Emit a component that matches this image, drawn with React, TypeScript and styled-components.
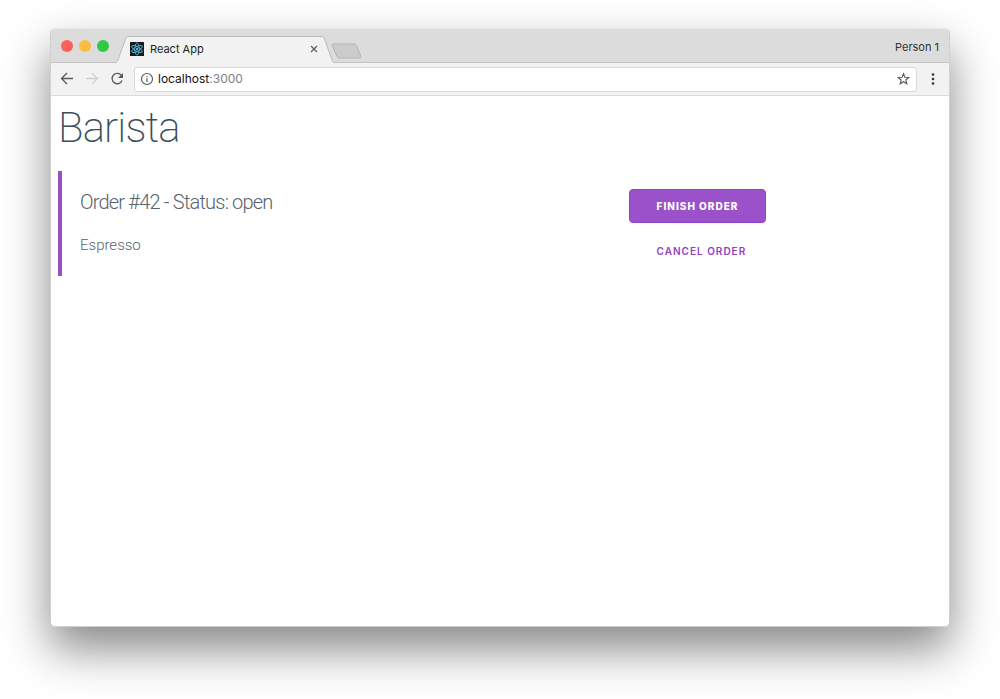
import React from "react";
import styled, { createGlobalStyle } from "styled-components";

const GlobalStyle = createGlobalStyle`
  *, *::before, *::after { box-sizing: border-box; }
  body { margin: 0; background: #fff; }
`;

const Desktop = styled.div`
  display: flex;
  min-height: 100vh;
  padding: 28px 50px 72px;
  overflow: hidden;
  font-family: Inter, "Liberation Sans", sans-serif;
`;

const BrowserWindow = styled.div`
  display: flex;
  flex: 1;
  flex-direction: column;
  min-width: 0;
  border: 1px solid #d0d0d0;
  border-top-color: #e8e8e8;
  border-radius: 5px;
  background: #fff;
  box-shadow: 0 22px 46px rgba(0, 0, 0, 0.47);
`;

const TabStrip = styled.div`
  display: flex;
  align-items: flex-end;
  height: 34px;
  padding: 0 10px;
  border-bottom: 1px solid #c3c3c3;
  border-radius: 4px 4px 0 0;
  background: #dcdcdc;
`;

const WindowControls = styled.div`
  display: flex;
  align-self: center;
  gap: 6px;
  padding-right: 6px;
`;

const WindowDot = styled.button<{ $color: string }>`
  width: 12px;
  height: 12px;
  padding: 0;
  border: 0;
  border-radius: 50%;
  background: ${(p) => p.$color};
`;

const Tab = styled.div`
  display: flex;
  height: 27px;
  margin-bottom: -1px;
`;

const TabEdge = styled.svg`
  display: block;
  width: 13px;
  height: 27px;
`;

const TabBody = styled.div`
  display: flex;
  align-items: center;
  width: 194px;
  padding: 0 2px 2px;
  border-top: 1px solid #bcbcbc;
  background: #f2f2f2;
  color: #222;
  font-size: 11px;
  line-height: 14px;
`;

const TabTitle = styled.span`
  flex: 1;
  margin-left: 6px;
`;

const IconButton = styled.button<{ $size: number; $color?: string }>`
  display: flex;
  flex: none;
  align-items: center;
  justify-content: center;
  width: ${(p) => p.$size}px;
  height: ${(p) => p.$size}px;
  padding: 0;
  border: 0;
  background: none;
  color: ${(p) => p.$color ?? "#5a5a5a"};
`;

const NewTabButton = styled.button`
  display: flex;
  align-self: flex-end;
  margin: 0 0 3px -4px;
  padding: 0;
  border: 0;
  background: none;
`;

const Profile = styled.button`
  align-self: center;
  margin-left: auto;
  padding: 2px 0 0;
  border: 0;
  background: none;
  color: #333;
  font-family: inherit;
  font-size: 11px;
  line-height: 14px;
`;

const Toolbar = styled.div`
  display: flex;
  align-items: center;
  height: 33px;
  padding: 0 8px;
  border-bottom: 1px solid #dcdcdc;
  background: #f2f2f2;
`;

const Navigation = styled.div`
  display: flex;
  gap: 9px;
  margin-right: 9px;
`;

const AddressBar = styled.div`
  display: flex;
  flex: 1;
  align-items: center;
  height: 25px;
  margin-right: 8px;
  padding: 0 5px;
  border: 1px solid #d8d8d8;
  border-radius: 3px;
  background: #fff;
`;

const Address = styled.a`
  flex: 1;
  margin-left: 4px;
  color: #808080;
  font-size: 12px;
  line-height: 16px;
  text-decoration: none;
`;

const Host = styled.span`
  color: #111;
`;

const Page = styled.main`
  padding: 7px 7px 24px;
  color: #56646e;
  font-family: Roboto, "Liberation Sans", sans-serif;
  font-weight: 300;
`;

const PageTitle = styled.h1`
  margin: 0 0 18px;
  color: #3b4f5a;
  font-size: 42px;
  font-weight: 200;
  letter-spacing: -0.02em;
  line-height: 50px;
`;

const OrderCard = styled.article`
  display: grid;
  grid-template-columns: 13fr 7fr;
  padding: 18px 18px 8px;
  border-left: 4px solid #9a4fc8;
`;

const OrderTitle = styled.h2`
  margin: 0 0 19px;
  font-size: 20px;
  font-weight: 300;
  letter-spacing: -0.04em;
  line-height: 26px;
`;

const OrderItem = styled.p`
  margin: 0;
  font-size: 15px;
  line-height: 22px;
`;

const Actions = styled.div`
  display: flex;
  flex-direction: column;
  align-items: flex-start;
  gap: 11px;
`;

const ActionButton = styled.button<{ $primary?: boolean }>`
  height: 34px;
  padding: 0 27px;
  border: 1px solid ${(p) => (p.$primary ? "#9142c5" : "transparent")};
  border-radius: 4px;
  background: ${(p) => (p.$primary ? "#9b51c9" : "transparent")};
  color: ${(p) => (p.$primary ? "#fff" : "#9142c5")};
  font-family: Inter, "Liberation Sans", sans-serif;
  font-size: 10px;
  font-weight: ${(p) => (p.$primary ? 800 : 600)};
  letter-spacing: 1px;
  line-height: 16px;
  text-transform: uppercase;
  white-space: nowrap;
`;

const ReactLogo = () => (
  <svg width="14" height="14" viewBox="0 0 28 28" aria-hidden="true">
    <rect width="28" height="28" rx="1" fill="#151a20" />
    <g fill="none" stroke="#55b9da" strokeWidth="1.7">
      <ellipse cx="14" cy="14" rx="12" ry="4.6" transform="rotate(30 14 14)" />
      <ellipse cx="14" cy="14" rx="12" ry="4.6" transform="rotate(90 14 14)" />
      <ellipse cx="14" cy="14" rx="12" ry="4.6" transform="rotate(150 14 14)" />
    </g>
    <circle cx="14" cy="14" r="2.4" fill="#55b9da" />
  </svg>
);

const ArrowIcon = ({ forward = false }: { forward?: boolean }) => (
  <svg width="16" height="16" viewBox="0 0 16 16" fill="none" stroke="currentColor" strokeWidth="1.3" aria-hidden="true">
    <path d={forward ? "M2 7.500h11.5M8 2 13.5 7.500 8 13" : "M14 7.500H2.5M8 2 2.5 7.500 8 13"} />
  </svg>
);

const ReloadIcon = () => (
  <svg width="16" height="16" viewBox="0 0 16 16" fill="none" stroke="currentColor" strokeWidth="1.3" aria-hidden="true">
    <path d="M12.4 4.3A5.2 5.2 0 1 0 13.1 9.600" />
    <path d="M14 2v5H9z" fill="currentColor" stroke="none" />
  </svg>
);

const InfoIcon = () => (
  <svg width="14" height="14" viewBox="0 0 14 14" fill="none" stroke="currentColor" strokeWidth="1.2" aria-hidden="true">
    <circle cx="7" cy="7" r="5.5" />
    <path d="M7 6.2V10M7 4v1.3" />
  </svg>
);

const StarIcon = () => (
  <svg width="14" height="14" viewBox="0 0 14 14" fill="none" stroke="currentColor" strokeWidth="1.1" strokeLinejoin="miter" aria-hidden="true">
    <path d="M6.500 1.700 7.900 5.300 11.800 5.500 8.800 8 9.800 11.800 6.500 9.700 3.200 11.800 4.200 8 1.200 5.500 5.100 5.300z" />
  </svg>
);

const App = () => (
  <>
    <GlobalStyle />
    <Desktop>
      <BrowserWindow>
        <TabStrip>
          <WindowControls>
            <WindowDot $color="#fc605b" aria-label="Close window" />
            <WindowDot $color="#fdbc40" aria-label="Minimize window" />
            <WindowDot $color="#2fc946" aria-label="Zoom window" />
          </WindowControls>
          <Tab>
            <TabEdge viewBox="0 0 13 27" aria-hidden="true">
              <path d="M0 27C2 26.500 2.500 25 3 24L10.500 3C11 1.500 11.500 .5 13 .5V27z" fill="#f2f2f2" />
              <path d="M0 26.500C2 26.500 2.500 25 3 24L10.500 3C11 1.500 11.500 .5 13 .5" fill="none" stroke="#bcbcbc" />
            </TabEdge>
            <TabBody>
              <ReactLogo />
              <TabTitle>React App</TabTitle>
              <IconButton $size={12} aria-label="Close tab">
                <svg width="8" height="8" viewBox="0 0 8 8" stroke="currentColor" strokeWidth="1.2" aria-hidden="true">
                  <path d="M1 1l6 6M7 1 1 7" />
                </svg>
              </IconButton>
            </TabBody>
            <TabEdge viewBox="0 0 13 27" aria-hidden="true">
              <path d="M13 27C11 26.500 10.500 25 10 24L2.500 3C2 1.500 1.500 .5 0 .5V27z" fill="#f2f2f2" />
              <path d="M13 26.500C11 26.500 10.500 25 10 24L2.500 3C2 1.500 1.500 .5 0 .5" fill="none" stroke="#bcbcbc" />
            </TabEdge>
          </Tab>
          <NewTabButton aria-label="New tab">
            <svg width="31" height="16" viewBox="0 0 31 16" aria-hidden="true">
              <path d="M2 1H23C24.500 1 25 1.500 25.500 2.500L29.700 13C30.200 14.500 29.800 15 28.500 15H8.500C7 15 6.500 14.500 6 13.500L1.200 2.500C.8 1.500 1 1 2 1z" fill="#cbcbcb" stroke="#b5b5b5" />
            </svg>
          </NewTabButton>
          <Profile>Person 1</Profile>
        </TabStrip>
        <Toolbar>
          <Navigation>
            <IconButton $size={16} aria-label="Back"><ArrowIcon /></IconButton>
            <IconButton $size={16} $color="#cfcfcf" aria-label="Forward" disabled><ArrowIcon forward /></IconButton>
            <IconButton $size={16} aria-label="Reload"><ReloadIcon /></IconButton>
          </Navigation>
          <AddressBar>
            <IconButton $size={14} aria-label="Site information"><InfoIcon /></IconButton>
            <Address href="http://localhost:3000"><Host>localhost</Host>:3000</Address>
            <IconButton $size={14} aria-label="Bookmark"><StarIcon /></IconButton>
          </AddressBar>
          <IconButton $size={16} $color="#333" aria-label="Menu">
            <svg width="4" height="14" viewBox="0 0 4 14" fill="currentColor" aria-hidden="true">
              <circle cx="2" cy="2.500" r="1.300" />
              <circle cx="2" cy="7" r="1.300" />
              <circle cx="2" cy="11.500" r="1.300" />
            </svg>
          </IconButton>
        </Toolbar>
        <Page>
          <PageTitle>Barista</PageTitle>
          <OrderCard>
            <div>
              <OrderTitle>Order #42 - Status: open</OrderTitle>
              <OrderItem>Espresso</OrderItem>
            </div>
            <Actions>
              <ActionButton $primary>Finish order</ActionButton>
              <ActionButton>Cancel order</ActionButton>
            </Actions>
          </OrderCard>
        </Page>
      </BrowserWindow>
    </Desktop>
  </>
);

export default App;
